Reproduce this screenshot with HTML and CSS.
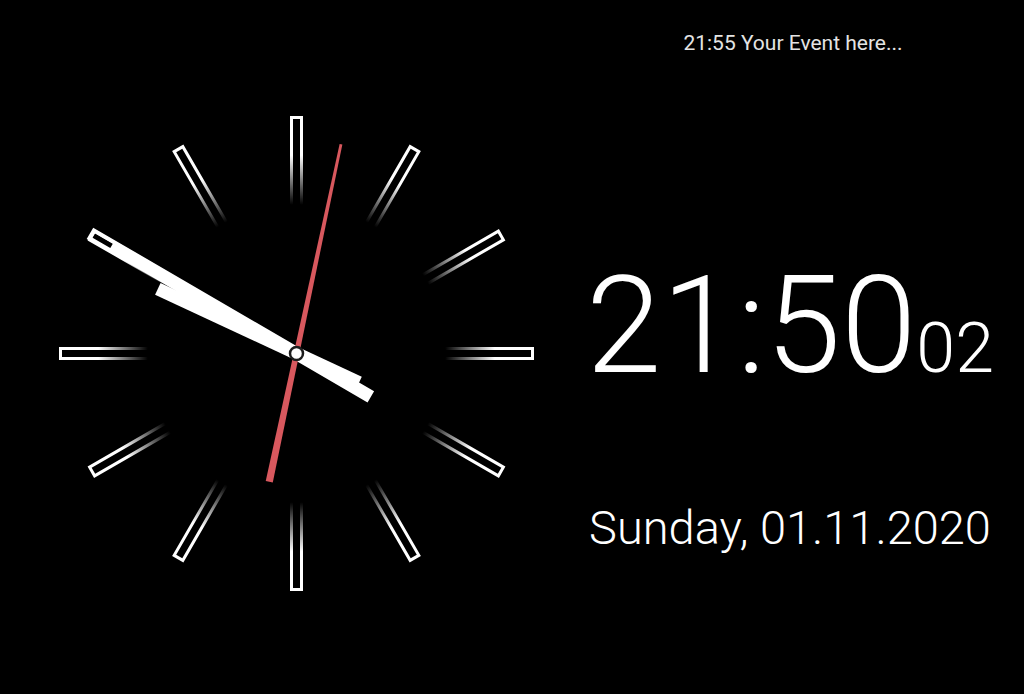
FILE: index.html
```html
<!DOCTYPE html>
<html lang="en">
<head>
<meta charset="utf-8">
<title>Clock</title>
<link rel="stylesheet" href="styles.css">
</head>
<body>
<main class="screen">
  <section class="analog">
    <svg class="dial" width="580" height="694" viewBox="0 0 580 694">
      <defs>
        <linearGradient id="fade" x1="0" y1="0" x2="0" y2="1">
          <stop offset="0" stop-color="#fff" stop-opacity="1"/>
          <stop offset="0.42" stop-color="#fff" stop-opacity="1"/>
          <stop offset="0.97" stop-color="#fff" stop-opacity="0"/>
        </linearGradient>
      </defs>
      <g transform="translate(296.5 353.5)">
        <g class="ticks" fill="none" stroke="url(#fade)" stroke-width="3">
          <rect x="-5" y="-236" width="10" height="90" transform="rotate(0)"/>
          <rect x="-5" y="-236" width="10" height="90" transform="rotate(30)"/>
          <rect x="-5" y="-236" width="10" height="90" transform="rotate(60)"/>
          <rect x="-5" y="-236" width="10" height="90" transform="rotate(90)"/>
          <rect x="-5" y="-236" width="10" height="90" transform="rotate(120)"/>
          <rect x="-5" y="-236" width="10" height="90" transform="rotate(150)"/>
          <rect x="-5" y="-236" width="10" height="90" transform="rotate(180)"/>
          <rect x="-5" y="-236" width="10" height="90" transform="rotate(210)"/>
          <rect x="-5" y="-236" width="10" height="90" transform="rotate(240)"/>
          <rect x="-5" y="-236" width="10" height="90" transform="rotate(270)"/>
          <rect x="-5" y="-236" width="10" height="90" transform="rotate(300)"/>
          <rect x="-5" y="-236" width="10" height="90" transform="rotate(330)"/>
        </g>
        <g transform="rotate(295)">
          <rect x="-6.5" y="-153" width="13" height="222" fill="#fff"/>
        </g>
        <g transform="rotate(300.2)">
          <path fill="#fff" fill-rule="evenodd" d="M-6.5 -239 H6.5 V86 H-6.5 Z M-2.5 -235 H2.5 V-214 H-2.5 Z"/>
        </g>
        <g transform="rotate(12)">
          <polygon fill="#d8585e" points="-1.4,-214 1.4,-214 3.6,131 -3.6,131"/>
        </g>
        <circle r="6.5" fill="#fff" stroke="#1c1c1c" stroke-width="2.5"/>
      </g>
    </svg>
  </section>
  <section class="info">
    <div class="event">21:55 Your Event here...</div>
    <div class="digital"><span class="hm">21:50</span><span class="sec">02</span></div>
    <div class="date">Sunday, 01.11.2020</div>
  </section>
</main>
</body>
</html>
```
FILE: styles.css
```css
html, body {
  margin: 0;
  padding: 0;
  background: #000;
}
body {
  width: 1024px;
  height: 694px;
  overflow: hidden;
  color: #fff;
  font-family: Roboto, "Noto Sans", "Liberation Sans", sans-serif;
}
.screen {
  display: flex;
  width: 1024px;
  height: 694px;
}
.analog {
  width: 580px;
  height: 694px;
  flex: none;
}
.dial {
  display: block;
}
.info {
  width: 420px;
  flex: none;
  display: flex;
  flex-direction: column;
  align-items: center;
  padding-top: 30px;
}
.event {
  margin-left: 6px;
  font-size: 21px;
  line-height: 26px;
  color: #e4e4e4;
}
.digital {
  margin-top: 202px;
  line-height: 136px;
  height: 136px;
  white-space: nowrap;
}
.hm {
  font-size: 136px;
  font-weight: 300;
  font-variant-numeric: tabular-nums;
}
.sec {
  font-size: 70px;
  font-weight: 300;
  font-variant-numeric: tabular-nums;
}
.date {
  font-size: 47px;
  margin-top: 110px;
  line-height: 47px;
  font-weight: 300;
  white-space: nowrap;
}
```
